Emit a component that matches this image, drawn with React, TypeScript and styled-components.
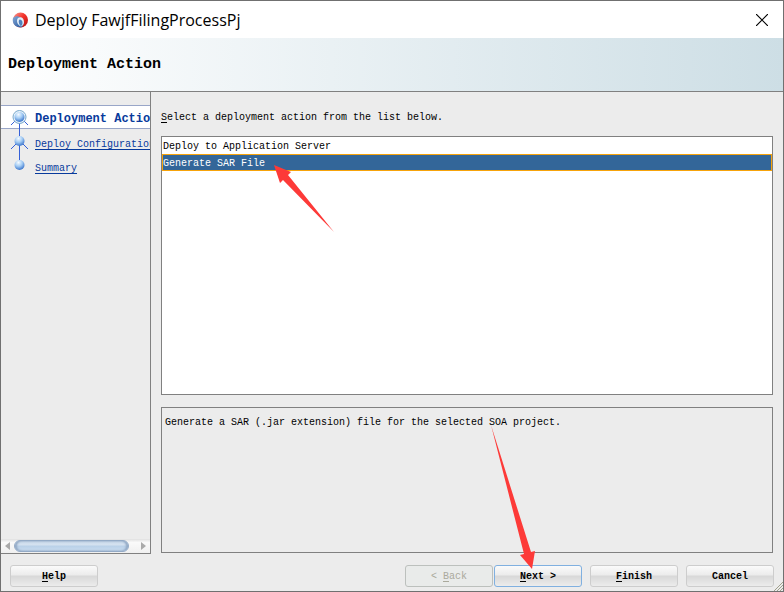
import React, { useState } from 'react';
import styled, { createGlobalStyle, css } from 'styled-components';

const GlobalStyle = createGlobalStyle`
  *, *::before, *::after { box-sizing: border-box; }
  body { margin: 0; background: #ececec; }
`;

const mono = css`
  font-family: 'Liberation Mono', 'Courier New', monospace;
  font-size: 10px;
  line-height: 16px;
`;

const Dialog = styled.main`
  ${mono}
  display: flex;
  flex-direction: column;
  min-height: 100vh;
  border: 1px solid #707070;
  background: #ececec;
  color: #000;
`;

const TitleBar = styled.header`
  display: flex;
  align-items: center;
  gap: 7px;
  height: 37px;
  padding: 0 10px 0 11px;
  background: #fff;
`;

const Title = styled.h1`
  flex: 1;
  margin: 0;
  font: 400 16px/20px 'Open Sans', 'Noto Sans', sans-serif;
`;

const CloseButton = styled.button`
  display: grid;
  place-items: center;
  width: 22px;
  height: 22px;
  padding: 0;
  border: 0;
  background: transparent;
`;

const Banner = styled.section`
  display: flex;
  align-items: center;
  height: 54px;
  padding: 0 7px;
  border-bottom: 1px solid #808080;
  background: linear-gradient(90deg, #fff 0%, #cddee5 100%);
`;

const Heading = styled.h2`
  margin: 0;
  font-size: 15px;
  line-height: 20px;
`;

const Body = styled.div`
  display: flex;
  flex: 1;
`;

const Sidebar = styled.nav`
  display: flex;
  flex-direction: column;
  width: 150px;
  padding-top: 13px;
  overflow: hidden;
  border-right: 1px solid #808080;
  border-bottom: 1px solid #808080;
`;

const Steps = styled.ol`
  flex: 1;
  margin: 0;
  padding: 0;
  list-style: none;
`;

const Step = styled.li<{ $active?: boolean }>`
  display: flex;
  align-items: center;
  gap: 7px;
  height: 24px;
  padding-left: 8px;
  white-space: nowrap;
  border: solid #99a6c8;
  border-width: ${(p) => (p.$active ? '1px 0' : '0')};
  background: ${(p) => (p.$active ? '#fff' : 'transparent')};
`;

const StepIcon = styled.svg`
  flex: none;
  width: 19px;
  height: 24px;
  overflow: visible;
`;

const StepLink = styled.a<{ $active?: boolean }>`
  padding-top: ${(p) => (p.$active ? 4 : 8)}px;
  color: #083a9c;
  font-size: ${(p) => (p.$active ? 12 : 10)}px;
  font-weight: ${(p) => (p.$active ? 700 : 400)};
  text-decoration: ${(p) => (p.$active ? 'none' : 'underline')};
  text-underline-offset: 2px;
`;

const ScrollBar = styled.div`
  display: flex;
  align-items: center;
  height: 14px;
  padding: 0 4px;
  background: linear-gradient(#e0e0e0, #fafafa 25%, #f0f0f0);
`;

const ScrollTrack = styled.div`
  flex: 1;
  padding: 0 12px 0 4px;
`;

const ScrollThumb = styled.div`
  height: 12px;
  border: 1px solid #93aac6;
  border-radius: 6px;
  background: linear-gradient(#c9d9ea, #d5e2f0 40%, #b9d0e8 50%, #c9dcf0);
  box-shadow: inset 2px 0 2px #93aac6, inset -2px 0 2px #93aac6;
`;

const Content = styled.section`
  display: flex;
  flex: 1;
  flex-direction: column;
  min-width: 0;
  padding: 18px 10px 1px;
`;

const ListLabel = styled.label`
  margin-bottom: 10px;
`;

const ListFrame = styled.div`
  position: relative;
  flex: 1;
  margin-bottom: 12px;
  border: 1px solid #808080;
  background: #fff;
`;

const List = styled.ul`
  margin: 0;
  padding: 0;
  list-style: none;
  outline: none;
`;

const Option = styled.li<{ $selected: boolean }>`
  height: 17px;
  line-height: 17px;
  color: ${(p) => (p.$selected ? '#fff' : '#000')};
  background: ${(p) => (p.$selected ? '#336699' : 'transparent')};
  border: 1px solid ${(p) => (p.$selected ? '#f7a30a' : 'transparent')};
`;

const Description = styled.p`
  height: 146px;
  margin: 0;
  padding: 7px 3px;
  border: 1px solid #808080;
`;

const Footer = styled.footer`
  position: relative;
  display: flex;
  align-items: flex-start;
  justify-content: space-between;
  padding: 11px 9px 4px;
`;

const Group = styled.div<{ $gap: number }>`
  display: flex;
  gap: ${(p) => p.$gap}px;
`;

const ButtonSlot = styled.div`
  position: relative;
`;

const Button = styled.button<{ $primary?: boolean }>`
  ${mono}
  width: 88px;
  height: 22px;
  padding: 2px 0 0;
  font-weight: 700;
  color: #000;
  border: 1px solid ${(p) => (p.$primary ? '#80b0e0' : '#cdcdcd')};
  border-radius: 3px;
  background: linear-gradient(#fafafa, #ececec 45%, #d8d8d8 50%, #ececec);

  &:disabled {
    font-weight: 400;
    color: #aaa99c;
    border-color: #bcc0bd;
    background: #e9ebea;
  }
`;

const Mnemonic = styled.span`
  text-decoration: underline;
  text-underline-offset: 2px;
`;

const ListArrow = styled.svg`
  position: absolute;
  top: 28px;
  left: 112px;
  pointer-events: none;
`;

const NextArrow = styled.svg`
  position: absolute;
  bottom: 18px;
  left: -4px;
  pointer-events: none;
`;

const Grip = styled.svg`
  position: absolute;
  right: 0;
  bottom: 0;
`;

function Logo() {
  return (
    <svg width="16" height="16" viewBox="0 0 16 16" aria-hidden="true">
      <defs>
        <linearGradient id="logoRed" x1="0" y1="0" x2="1" y2="1">
          <stop offset="0" stopColor="#f7a49b" />
          <stop offset=".45" stopColor="#f5342c" />
          <stop offset="1" stopColor="#b31313" />
        </linearGradient>
        <linearGradient id="logoBlue" x1="0" y1="0" x2="1" y2="1">
          <stop offset="0" stopColor="#86a8d6" />
          <stop offset="1" stopColor="#1d559c" />
        </linearGradient>
      </defs>
      <circle cx="8.5" cy="8" r="7.5" fill="url(#logoRed)" />
      <path d="M1 6C0 10 2 14 6 15c2 .6 4 .3 4 0 2-2 2-6 0-8C8 4 4 3 1 6z" fill="url(#logoBlue)" />
      <path d="M6 6c3-2 6 0 6 4 0 2-1 4-3 4.500C5 13 4 8 6 6z" fill="#e3edf7" />
      <path d="M7.500 7.500c2 0 3 1.500 3 3.500s-1 3-2 3C7 12.500 6 9 7.500 7.500z" fill="#4f82bd" />
    </svg>
  );
}

type StepKind = 'current' | 'middle' | 'last';

function StepMarker({ kind }: { kind: StepKind }) {
  return (
    <StepIcon viewBox="0 0 19 24" aria-hidden="true">
      <defs>
        <radialGradient id={`ball-${kind}`} cx=".4" cy=".25" r=".75">
          <stop offset="0" stopColor="#f4faff" />
          <stop offset=".5" stopColor="#a4ccf4" />
          <stop offset="1" stopColor="#3c76cc" />
        </radialGradient>
      </defs>
      {kind !== 'last' && (
        <path d="M10.500 15v16M7 15l-5 5M14 15l5 5" stroke="#3560d8" fill="none" />
      )}
      {kind === 'current' && <circle cx="10.500" cy="12" r="6.500" fill="#e8f2fa" stroke="#79a9cc" />}
      <circle cx="10.500" cy="12" r="5" fill={`url(#ball-${kind})`} />
    </StepIcon>
  );
}

const steps: { label: string; kind: StepKind }[] = [
  { label: 'Deployment Action', kind: 'current' },
  { label: 'Deploy Configuration', kind: 'middle' },
  { label: 'Summary', kind: 'last' },
];

const actions = ['Deploy to Application Server', 'Generate SAR File'];

export default function App() {
  const [selected, setSelected] = useState(1);

  return (
    <Dialog>
      <GlobalStyle />
      <TitleBar>
        <Logo />
        <Title>Deploy FawjfFilingProcessPj</Title>
        <CloseButton aria-label="Close">
          <svg width="12" height="12" viewBox="0 0 12 12">
            <path d="M0 0l12 12M12 0L0 12" stroke="#000" strokeWidth="1.2" />
          </svg>
        </CloseButton>
      </TitleBar>
      <Banner>
        <Heading>Deployment Action</Heading>
      </Banner>
      <Body>
        <Sidebar aria-label="Steps">
          <Steps>
            {steps.map(({ label, kind }) => (
              <Step key={label} $active={kind === 'current'}>
                <StepMarker kind={kind} />
                <StepLink href="#" $active={kind === 'current'}>{label}</StepLink>
              </Step>
            ))}
          </Steps>
          <ScrollBar>
            <svg width="5" height="8" viewBox="0 0 5 8" aria-hidden="true"><path d="M5 0v8L0 4z" fill="#aaa" /></svg>
            <ScrollTrack><ScrollThumb /></ScrollTrack>
            <svg width="5" height="8" viewBox="0 0 5 8" aria-hidden="true"><path d="M0 0v8l5-4z" fill="#aaa" /></svg>
          </ScrollBar>
        </Sidebar>
        <Content>
          <ListLabel id="action-label"><Mnemonic>S</Mnemonic>elect a deployment action from the list below.</ListLabel>
          <ListFrame>
            <List role="listbox" tabIndex={0} aria-labelledby="action-label">
              {actions.map((action, i) => (
                <Option key={action} role="option" aria-selected={i === selected} $selected={i === selected} onClick={() => setSelected(i)}>
                  {action}
                </Option>
              ))}
            </List>
            <ListArrow width="62" height="68" viewBox="0 0 62 68" aria-hidden="true">
              <path d="M0 0l17 7-3 3 46 57L9 15l-3 3z" fill="#fd3a38" />
            </ListArrow>
          </ListFrame>
          <Description>Generate a SAR (.jar extension) file for the selected SOA project.</Description>
        </Content>
      </Body>
      <Footer>
        <Button><Mnemonic>H</Mnemonic>elp</Button>
        <Group $gap={8}>
          <Group $gap={1}>
            <Button disabled>&lt; <Mnemonic>B</Mnemonic>ack</Button>
            <ButtonSlot>
              <Button $primary><Mnemonic>N</Mnemonic>ext &gt;</Button>
              <NextArrow width="46" height="144" viewBox="0 0 46 144" aria-hidden="true">
                <path d="M1 0l33 129-4 1 12 14 3-18-4 1z" fill="#fd3a38" />
              </NextArrow>
            </ButtonSlot>
          </Group>
          <Button><Mnemonic>F</Mnemonic>inish</Button>
          <Button>Cancel</Button>
        </Group>
        <Grip width="9" height="9" viewBox="0 0 9 9" aria-hidden="true">
          <path d="M0 9l9-9M3 9l6-6M6 9l3-3" stroke="#a0a08c" />
        </Grip>
      </Footer>
    </Dialog>
  );
}
